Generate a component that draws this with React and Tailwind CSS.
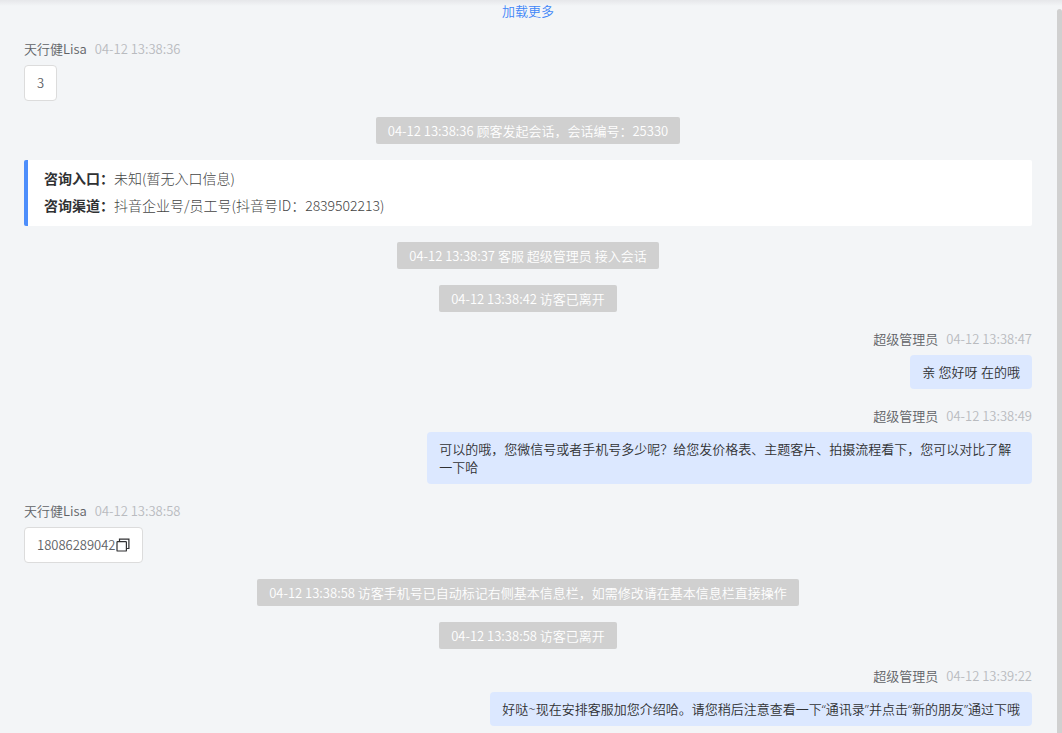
const records = [
  { type: "guest", name: "天行健Lisa", time: "04-12 13:38:36", text: "3" },
  { type: "notice", text: "04-12 13:38:36 顾客发起会话，会话编号：25330" },
  {
    type: "source",
    rows: [
      { label: "咨询入口：", value: "未知(暂无入口信息)" },
      { label: "咨询渠道：", value: "抖音企业号/员工号(抖音号ID：2839502213)" },
    ],
  },
  { type: "notice", text: "04-12 13:38:37 客服 超级管理员 接入会话" },
  { type: "notice", text: "04-12 13:38:42 访客已离开" },
  {
    type: "staff",
    name: "超级管理员",
    time: "04-12 13:38:47",
    text: "亲 您好呀 在的哦",
  },
  {
    type: "staff",
    name: "超级管理员",
    time: "04-12 13:38:49",
    text: "可以的哦，您微信号或者手机号多少呢？给您发价格表、主题客片、拍摄流程看下，您可以对比了解一下哈",
  },
  {
    type: "guest",
    name: "天行健Lisa",
    time: "04-12 13:38:58",
    text: "18086289042",
    copyable: true,
  },
  {
    type: "notice",
    text: "04-12 13:38:58 访客手机号已自动标记右侧基本信息栏，如需修改请在基本信息栏直接操作",
  },
  { type: "notice", text: "04-12 13:38:58 访客已离开" },
  {
    type: "staff",
    name: "超级管理员",
    time: "04-12 13:39:22",
    text: "好哒~现在安排客服加您介绍哈。请您稍后注意查看一下“通讯录”并点击“新的朋友”通过下哦",
  },
];

function CopyIcon() {
  return (
    <svg
      viewBox="0 0 14 14"
      className="size-3.5"
      fill="none"
      stroke="currentColor"
      strokeWidth="1.2"
      aria-hidden="true"
    >
      <rect x="1" y="3.6" width="9.4" height="9.4" rx="0.6" />
      <path d="M3.5 3.6V1.2h9.4v9.3h-2.5" />
    </svg>
  );
}

function Meta({ name, time }) {
  return (
    <div className="mb-[5px] flex gap-2 leading-[22px]">
      <span className="text-[#606266]">{name}</span>
      <time className="text-[#b9bbbf]">{time}</time>
    </div>
  );
}

function GuestMessage({ name, time, text, copyable }) {
  return (
    <li className="flex flex-col items-start">
      <Meta name={name} time={time} />
      <div className="flex max-w-[60%] items-center rounded border border-[#dcdcdc] bg-white px-3 py-2 leading-[18px] text-[#606266]">
        <span>{text}</span>
        {copyable && (
          <button type="button" aria-label="复制" className="text-[#303133]">
            <CopyIcon />
          </button>
        )}
      </div>
    </li>
  );
}

function StaffMessage({ name, time, text }) {
  return (
    <li className="flex flex-col items-end">
      <Meta name={name} time={time} />
      <p className="max-w-[60%] rounded bg-[#dce8ff] px-3 py-2 font-['Noto_Sans','Noto_Sans_CJK_SC',sans-serif] leading-[18px] text-[#303133]">
        {text}
      </p>
    </li>
  );
}

function Notice({ text }) {
  return (
    <li className="flex justify-center">
      <p className="rounded-xs bg-[#d0d0d0] px-3 pt-[5px] pb-1 leading-[18px] text-white">
        {text}
      </p>
    </li>
  );
}

function SourceCard({ rows }) {
  return (
    <li className="rounded-xs border-l-4 border-[#4d8efb] bg-white px-4 pt-[5px] pb-[7px]">
      <dl className="text-sm leading-[27px]">
        {rows.map((row) => (
          <div key={row.label} className="flex">
            <dt className="font-bold text-[#303133]">{row.label}</dt>
            <dd className="font-light text-[#444444]">{row.value}</dd>
          </div>
        ))}
      </dl>
    </li>
  );
}

const views = {
  guest: GuestMessage,
  staff: StaffMessage,
  notice: Notice,
  source: SourceCard,
};

export default function App() {
  return (
    <div className="relative flex min-h-screen bg-[#f3f5f7] font-['Noto_Sans_CJK_SC',sans-serif] text-[13px] font-[350]">
      {/* shadow cast by the header above the list */}
      <div
        aria-hidden="true"
        className="pointer-events-none absolute inset-x-0 top-0 h-1.5 bg-linear-to-b from-[#e6e7ea] to-[#f3f5f7]"
      />
      <main className="relative min-w-0 flex-1 pr-[25px] pb-1.5 pl-6">
        <div className="mb-4 flex justify-center">
          <button type="button" className="leading-[22px] text-[#3f86f7]">
            加载更多
          </button>
        </div>
        <ul className="flex flex-col gap-4">
          {records.map((record, i) => {
            const View = views[record.type];
            return <View key={i} {...record} />;
          })}
        </ul>
      </main>
      {/* scrollbar */}
      <div aria-hidden="true" className="flex w-[5px] pt-[9px]">
        <div className="flex-1 rounded-t-full bg-[#d0d0d0]" />
      </div>
    </div>
  );
}
